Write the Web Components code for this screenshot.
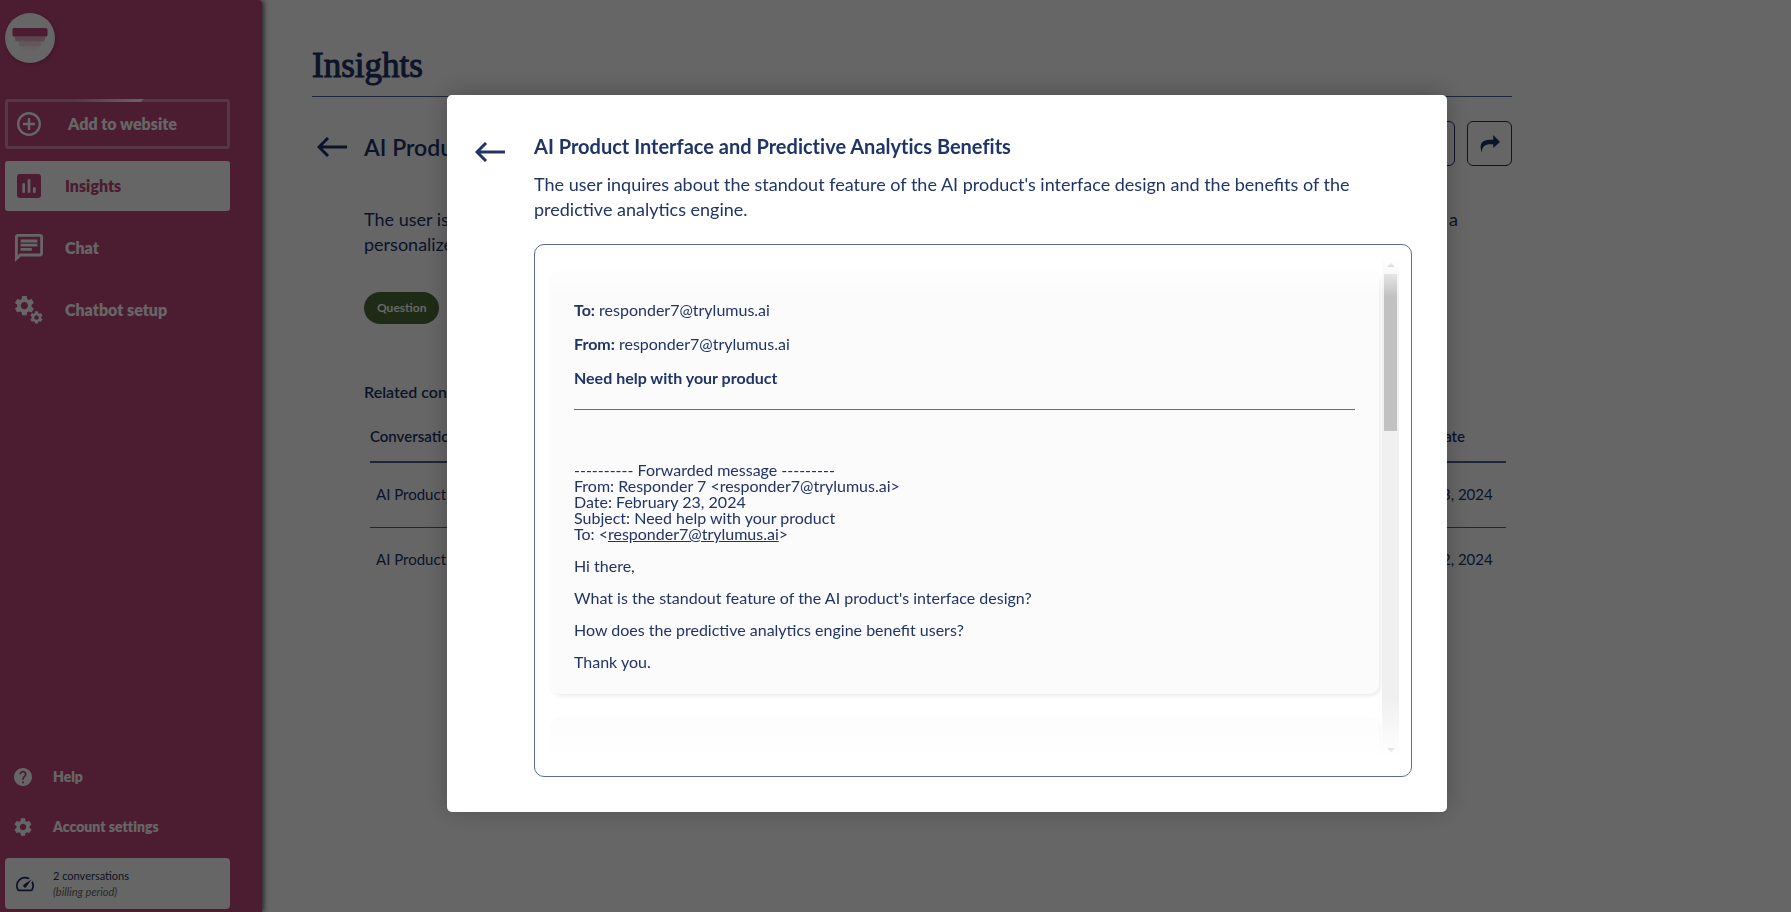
<!DOCTYPE html>
<html lang="en">
<head>
<meta charset="utf-8">
<title>Insights</title>
<style>
html, body { height: 100%; margin: 0; }
body { font-family: Lato, "Open Sans", sans-serif; color: #203468; background: #fff; overflow: hidden; }
</style>
</head>
<body>
<lumus-app></lumus-app>
<script>
const GEAR = 'M19.14 12.94c.04-.3.06-.61.06-.94 0-.32-.02-.64-.07-.94l2.03-1.58c.18-.14.23-.41.12-.61l-1.92-3.32c-.12-.22-.37-.29-.59-.22l-2.39.96c-.5-.38-1.03-.7-1.62-.94l-.36-2.54c-.04-.24-.24-.41-.48-.41h-3.84c-.24 0-.43.17-.47.41l-.36 2.54c-.59.24-1.13.57-1.62.94l-2.39-.96c-.22-.08-.47 0-.59.22L2.74 8.87c-.12.21-.08.47.12.61l2.03 1.58c-.05.3-.09.63-.09.94s.02.64.07.94l-2.03 1.58c-.18.14-.23.41-.12.61l1.92 3.32c.12.22.37.29.59.22l2.39-.96c.5.38 1.03.7 1.62.94l.36 2.54c.05.24.24.41.48.41h3.84c.24 0 .44-.17.47-.41l.36-2.54c.59-.24 1.13-.56 1.62-.94l2.39.96c.22.08.47 0 .59-.22l1.92-3.32c.12-.22.07-.47-.12-.61l-2.01-1.58zM12 15.6c-1.98 0-3.6-1.62-3.6-3.6s1.62-3.6 3.6-3.6 3.6 1.62 3.6 3.6-1.62 3.6-3.6 3.6z';
const ICONS = {
  add: ['2 2 20 20', '<path d="M13 7h-2v4H7v2h4v4h2v-4h4v-2h-4V7zm-1-5C6.48 2 2 6.48 2 12s4.48 10 10 10 10-4.48 10-10S17.52 2 12 2zm0 18c-4.41 0-8-3.59-8-8s3.59-8 8-8 8 3.59 8 8-3.59 8-8 8z"/>'],
  chart: ['3 3 18 18', '<path d="M19 3H5c-1.1 0-2 .9-2 2v14c0 1.1.9 2 2 2h14c1.1 0 2-.9 2-2V5c0-1.1-.9-2-2-2zM9 17H7v-7h2v7zm4 0h-2V7h2v10zm4 0h-2v-4h2v4z"/>'],
  chat: ['2 2 20 20', '<path d="M4 4h16v12H5.17L4 17.17V4m0-2c-1.1 0-1.99.9-1.99 2L2 22l4-4h14c1.1 0 2-.9 2-2V4c0-1.1-.9-2-2-2H4zm2 10h8v2H6v-2zm0-3h12v2H6V9zm0-3h12v2H6V6z"/>'],
  gears: ['0 0 28 28', `<path transform="translate(-2.6 -2.3)" d="${GEAR}"/><path transform="translate(13.8 13.8) scale(.64)" d="${GEAR}"/>`],
  help: ['2 2 20 20', '<path d="M12 2C6.480 2 2 6.480 2 12s4.480 10 10 10 10-4.480 10-10S17.520 2 12 2zm1 17h-2v-2h2v2zm2.070-7.750l-.9.920C13.450 12.900 13 13.500 13 15h-2v-.5c0-1.100.450-2.100 1.170-2.830l1.240-1.260c.370-.360.590-.860.590-1.410 0-1.100-.9-2-2-2s-2 .9-2 2H8c0-2.210 1.790-4 4-4s4 1.790 4 4c0 .88-.36 1.680-.93 2.250z"/>'],
  gear: ['2 2 20 20', `<path d="${GEAR}"/>`],
  speed: ['2 2 20 20', '<path d="M20.380 8.570l-1.230 1.850a8 8 0 0 1-.22 7.580H5.070A8 8 0 0 1 15.580 6.850l1.850-1.230A10 10 0 0 0 3.350 19a2 2 0 0 0 1.720 1h13.850a2 2 0 0 0 1.740-1 10 10 0 0 0-.27-10.440z"/><path d="M10.590 15.410a2 2 0 0 0 2.830 0l5.660-8.490-8.490 5.660a2 2 0 0 0 0 2.830z"/>'],
  back: ['0 0 30 20', '<path fill="none" stroke="currentColor" stroke-width="3" d="M30 10H2M11 1 2 10l9 9"/>'],
  share: ['0 0 20 18', '<path d="M1.6 17.6C-.9 9.500 1.500 5.200 9 4.800 10.500 4.700 12 4.700 13.200 4.700V0L20 6.900l-6.800 6.200V9.300C7 9 2.300 9.500 1.600 17.600z"/>'],
  logo: ['0 0 50 50', '<rect x="7.500" y="15" width="35" height="8.500" rx="1.500"/><path opacity=".42" d="M10 23.500h30v3a2 2 0 0 1-2 2H12a2 2 0 0 1-2-2z"/><path opacity=".2" d="M14 28.500h22v3a2 2 0 0 1-2 2H16a2 2 0 0 1-2-2z"/><path opacity=".05" d="M17 33.500h16v4H19a2 2 0 0 1-2-2z"/>']
};

class Base extends HTMLElement {
  constructor() {
    super();
    this.attachShadow({ mode: 'open' });
  }
  connectedCallback() { this.shadowRoot.innerHTML = this.render(); }
}

customElements.define('ui-icon', class extends Base {
  render() {
    const [box, body] = ICONS[this.getAttribute('name')];
    return `<style>:host{display:block;flex:none}svg{display:block;width:100%;height:100%;fill:currentColor}</style>
      <svg viewBox="${box}" aria-hidden="true">${body}</svg>`;
  }
});

customElements.define('nav-item', class extends Base {
  render() {
    return `<style>
      :host{display:block}
      a{display:flex;align-items:center;box-sizing:border-box;height:50px;padding-left:10px;border-radius:3px;color:#fff;text-decoration:none;font-weight:800;font-size:16px;line-height:20px;font-variant-ligatures:none}
      .ico{display:flex;justify-content:center;width:28px;margin-right:22px}
      ui-icon{width:28px;height:28px}
      :host([name=add]) ui-icon,:host([name=chart]) ui-icon{width:24px;height:24px}
      :host([active]) a{background:#fff;color:#bf487c}
      :host([framed]) a{padding-left:7px;border:3px solid rgba(255,255,255,.36);position:relative}
      :host([framed]) .ico{margin-right:25px}
      :host([framed]) a::before{content:"";position:absolute;top:-3px;left:30%;width:32%;height:3px;background:linear-gradient(90deg,rgba(255,255,255,0),#fff);clip-path:polygon(0 0,100% 0,calc(100% - 3px) 100%,0 100%)}
      :host([small]) a{padding-left:9px;font-size:14px}
      :host([small]) .ico{width:18px;margin-right:21px}
      :host([small]) ui-icon{width:18px;height:18px}
    </style><a href="#"><span class="ico"><ui-icon name="${this.getAttribute('name')}"></ui-icon></span><slot></slot></a>`;
  }
});

customElements.define('side-bar', class extends Base {
  render() {
    return `<style>
      :host{display:flex;flex-direction:column;box-sizing:border-box;width:262px;flex:none;padding:13px 32px 3px 5px;background:#bf487c;border-radius:0 4px 0 0;box-shadow:2px 0 5px rgba(0,0,0,.6);z-index:1}
      .logo{display:block;width:50px;height:50px;border-radius:50%;background:#fff;color:#bf487c;box-shadow:1px 1px 4px rgba(0,0,0,.25);margin-bottom:36px}
      nav{display:flex;flex-direction:column;gap:12px}
      .foot{display:block;margin-top:auto}
      .usage{display:flex;align-items:center;box-sizing:border-box;height:51px;margin-top:6px;padding-left:11px;gap:19px;border-radius:4px;background:#fff;color:#1f3266}
      .usage ui-icon{width:18px;height:18px}
      p{margin:0;font-size:11px;line-height:17px}
      em{display:block;line-height:16px;color:#666}
    </style>
    <a class="logo" href="#" aria-label="Home"><ui-icon name="logo"></ui-icon></a>
    <nav>
      <nav-item name="add" framed>Add to website</nav-item>
      <nav-item name="chart" active>Insights</nav-item>
      <nav-item name="chat">Chat</nav-item>
      <nav-item name="gears">Chatbot setup</nav-item>
    </nav>
    <div class="foot">
      <nav-item name="help" small>Help</nav-item>
      <nav-item name="gear" small>Account settings</nav-item>
      <div class="usage"><ui-icon name="speed"></ui-icon><p>2 conversations<em>(billing period)</em></p></div>
    </div>`;
  }
});

customElements.define('back-button', class extends Base {
  render() {
    return `<style>:host{display:block;flex:none}button{display:block;padding:0;border:0;background:none;color:inherit;cursor:pointer}ui-icon{width:30px;height:20px}</style>
      <button type="button" aria-label="Back"><ui-icon name="back"></ui-icon></button>`;
  }
});

customElements.define('insights-page', class extends Base {
  render() {
    return `<style>
      :host{display:block;flex:1;min-width:0;padding:45px 50px 0}
      main{max-width:1200px}
      h1{margin:0;padding-bottom:10px;border-bottom:1px solid #4d618f;font:400 35px/41px "Liberation Serif",serif;-webkit-text-stroke:1px currentColor}
      .top{display:flex;align-items:flex-start;margin-top:24px;padding-left:5px}
      .top back-button{margin:16px 17px 0 0}
      h2{margin:0;flex:1;font-size:23px;line-height:52px;font-weight:600}
      .tools{display:flex;gap:12px}
      .tools button{display:flex;align-items:center;justify-content:center;box-sizing:border-box;width:45px;height:45px;padding:0;border:1px solid #1f3266;border-radius:6px;background:none;color:#1f3266}
      .tools ui-icon{width:20px;height:18px}
      .body{padding-left:52px}
      .desc{margin:34px 54px 0 0;font-size:18px;line-height:25px}
      .line{display:flex;justify-content:space-between}
      .tag{display:inline-block;margin-top:35px;padding:0 13px;border-radius:16px;background:#4d6c38;color:#fff;font-size:12px;line-height:32px;font-weight:700}
      h3{margin:57px 0 0;font-size:16px;line-height:22px;font-weight:600}
      table{width:calc(100% - 12px);margin:23px 6px 0;border-collapse:collapse;font-size:15px;line-height:20px}
      th{padding:0 0 15px;border-bottom:2px solid #4d618f;font-weight:600;font-size:15px}
      td{height:62px;padding:0 6px 2px;border-bottom:1px solid #4d618f}
      tr:last-child td{border-bottom:0}
      th:first-child,td:first-child{text-align:left}
      th:last-child{width:114px}
      td:last-child{padding:0 0 2px;text-align:center}
    </style>
    <main>
      <h1>Insights</h1>
      <div class="top">
        <back-button></back-button><h2>AI Product</h2>
        <div class="tools"><button type="button" aria-label="Save"></button><button type="button" aria-label="Share"><ui-icon name="share"></ui-icon></button></div>
      </div>
      <div class="body">
        <p class="desc"><span class="line"><span>The user is</span><span>a</span></span>personalized</p>
        <span class="tag">Question</span>
        <h3>Related conversations</h3>
        <table>
          <thead><tr><th>Conversation</th><th>Date</th></tr></thead>
          <tbody>
            <tr><td>AI Product</td><td>Feb 23, 2024</td></tr>
            <tr><td>AI Product</td><td>Feb 22, 2024</td></tr>
          </tbody>
        </table>
      </div>
    </main>`;
  }
});

customElements.define('message-card', class extends Base {
  render() {
    return `<style>
      :host{display:block;padding:30px 24px 24px;border-radius:10px;background:#fbfbfb;box-shadow:2px 2px 4px rgba(0,0,0,.08);font-size:16px;line-height:16px}
      :host([pending]){min-height:600px}
    </style><slot></slot>`;
  }
});

customElements.define('scroll-frame', class extends Base {
  render() {
    return `<style>
      :host{display:block;padding:12px 12px 18px;border:1px solid #5c6c98;border-radius:10px}
      .fade{display:flex;height:55vh;mask-image:linear-gradient(transparent 0,#000 8%,#000 88%,transparent 100%)}
      .view{flex:1;overflow-y:auto;scrollbar-width:none;padding:13px 3px 0}
      .bar{display:flex;flex-direction:column;align-items:center;width:17px;background:#f0f0f0}
      .bar i{display:flex;align-items:center;justify-content:center;height:17px}
      .bar i::after{content:"";border:4px solid transparent;border-top-width:0;border-bottom-color:#777}
      .bar i:last-child{margin-top:auto}
      .bar i:last-child::after{border-width:4px 4px 0;border-color:#505050 transparent transparent}
      .thumb{width:13px;height:34%;max-height:157px;background:#c1c1c1}
    </style>
    <div class="fade"><div class="view"><slot></slot></div><div class="bar" aria-hidden="true"><i></i><div class="thumb"></div><i></i></div></div>`;
  }
});

customElements.define('conversation-dialog', class extends Base {
  render() {
    return `<style>
      :host{display:flex;align-items:center;justify-content:center;position:fixed;inset:0;box-sizing:border-box;padding:0 0 5px 103px;background:rgba(0,0,0,.6);z-index:2}
      section{display:flex;align-items:flex-start;box-sizing:border-box;width:1000px;max-width:100%;padding:35px 35px 35px 28px;border-radius:5px;background:#fff;box-shadow:0 -2px 26px rgba(0,0,0,.25)}
      back-button{margin:12px 29px 0 0}
      .content{flex:1;min-width:0}
      h2{margin:0 0 10px;font-size:20px;line-height:32px;font-weight:700;font-variant-ligatures:none}
      .desc{margin:0 0 22px;font-size:18px;line-height:25px}
      .head{margin:0;line-height:20px}
      .head+.head{margin-top:14px}
      .head b{font-weight:700}
      hr{height:1px;margin:21px 0 52px;border:0;background:#5c6c98}
      .mail p{margin:0 0 16px}
      .mail p:last-child{margin:0}
      a{color:inherit}
      message-card+message-card{margin-top:23px}
    </style>
    <section role="dialog" aria-modal="true" aria-labelledby="t">
      <back-button></back-button>
      <div class="content">
        <h2 id="t">AI Product Interface and Predictive Analytics Benefits</h2>
        <p class="desc">The user inquires about the standout feature of the AI product's interface design and the benefits of the predictive analytics engine.</p>
        <scroll-frame>
          <message-card>
            <p class="head"><b>To:</b> responder7@trylumus.ai</p>
            <p class="head"><b>From:</b> responder7@trylumus.ai</p>
            <p class="head"><b>Need help with your product</b></p>
            <hr>
            <div class="mail">
              <p>---------- Forwarded message ---------<br>From: Responder 7 &lt;responder7@trylumus.ai&gt;<br>Date: February 23, 2024<br>Subject: Need help with your product<br>To: &lt;<a href="mailto:responder7@trylumus.ai">responder7@trylumus.ai</a>&gt;</p>
              <p>Hi there,</p>
              <p>What is the standout feature of the AI product's interface design?</p>
              <p>How does the predictive analytics engine benefit users?</p>
              <p>Thank you.</p>
            </div>
          </message-card>
          <message-card pending></message-card>
        </scroll-frame>
      </div>
    </section>`;
  }
});

customElements.define('lumus-app', class extends Base {
  render() {
    return `<style>:host{display:flex;height:100%}</style>
      <side-bar></side-bar><insights-page></insights-page><conversation-dialog></conversation-dialog>`;
  }
});
</script>
</body>
</html>
